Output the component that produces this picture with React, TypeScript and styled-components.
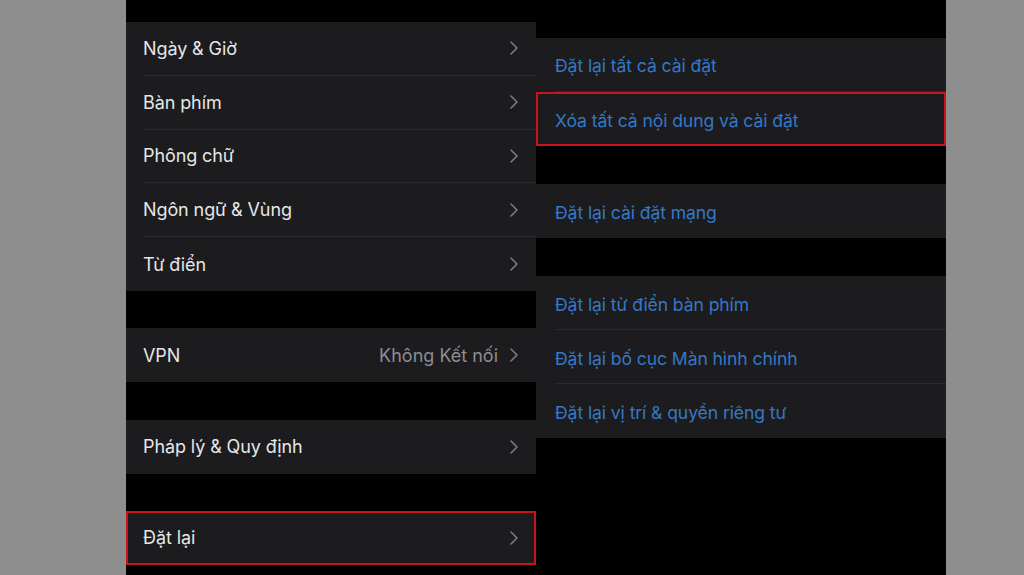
import React from "react";
import styled, { createGlobalStyle } from "styled-components";

const Global = createGlobalStyle`
  html, body { margin: 0; padding: 0; background: #8e8e8e; }
  body { font-family: "Inter", "Noto Sans", sans-serif; -webkit-font-smoothing: antialiased; }
`;

const Page = styled.div`
  display: flex;
  width: 1024px;
  height: 575px;
  overflow: hidden;
  background: #8e8e8e;
`;

const Side = styled.div<{ $w: number }>`
  width: ${(p) => p.$w}px;
  flex: none;
  background: #8e8e8e;
`;

const Stage = styled.div`
  display: flex;
  width: 820px;
  flex: none;
  background: #000;
`;

const Column = styled.div<{ $top: number; $gap: number }>`
  width: 410px;
  flex: none;
  display: flex;
  flex-direction: column;
  gap: ${(p) => p.$gap}px;
  padding-top: ${(p) => p.$top}px;
`;

const Group = styled.div`
  display: flex;
  flex-direction: column;
  background: #1c1c1e;
`;

const Row = styled.div<{ $hl?: boolean; $inset: number }>`
  display: flex;
  height: 53.8px;
  flex: none;
  padding-left: ${(p) => p.$inset}px;
  box-shadow: ${(p) => (p.$hl ? "inset 0 0 0 2px #c8141c" : "none")};
  &:not(:last-child) > div {
    border-bottom: 1px solid #2a2a2d;
  }
`;

const RowInner = styled.div`
  flex: 1;
  display: flex;
  align-items: center;
  padding-right: 18px;
  gap: 12px;
`;

const Label = styled.span<{ $blue?: boolean }>`
  flex: 1;
  font-size: ${(p) => (p.$blue ? "17.6px" : "18px")};
  letter-spacing: -0.1px;
  padding-top: ${(p) => (p.$blue ? "3px" : "0")};
  color: ${(p) => (p.$blue ? "#3478c6" : "#e6e6e8")};
`;

const Value = styled.span`
  font-size: 18px;
  color: #8d8d93;
`;

const Chevron = () => (
  <svg width="8" height="14" viewBox="0 0 8 14" fill="none">
    <path d="M1 1l6 6-6 6" stroke="#7c7c80" strokeWidth="1.6" strokeLinecap="round" strokeLinejoin="round" />
  </svg>
);

type Item = { label: string; value?: string; hl?: boolean };

const leftGroups: Item[][] = [
  [
    { label: "Ngày & Giờ" },
    { label: "Bàn phím" },
    { label: "Phông chữ" },
    { label: "Ngôn ngữ & Vùng" },
    { label: "Từ điển" },
  ],
  [{ label: "VPN", value: "Không Kết nối" }],
  [{ label: "Pháp lý & Quy định" }],
  [{ label: "Đặt lại", hl: true }],
];

const rightGroups: Item[][] = [
  [{ label: "Đặt lại tất cả cài đặt" }, { label: "Xóa tất cả nội dung và cài đặt", hl: true }],
  [{ label: "Đặt lại cài đặt mạng" }],
  [
    { label: "Đặt lại từ điển bàn phím" },
    { label: "Đặt lại bố cục Màn hình chính" },
    { label: "Đặt lại vị trí & quyền riêng tư" },
  ],
];

export default function App() {
  return (
    <>
      <Global />
      <Page>
        <Side $w={126} />
        <Stage>
          <Column $top={22} $gap={37.5}>
            {leftGroups.map((g, i) => (
              <Group key={i}>
                {g.map((it) => (
                  <Row key={it.label} $hl={it.hl} $inset={17}>
                    <RowInner>
                      <Label>{it.label}</Label>
                      {it.value && <Value>{it.value}</Value>}
                      <Chevron />
                    </RowInner>
                  </Row>
                ))}
              </Group>
            ))}
          </Column>
          <Column $top={38} $gap={38.5}>
            {rightGroups.map((g, i) => (
              <Group key={i}>
                {g.map((it) => (
                  <Row key={it.label} $hl={it.hl} $inset={19}>
                    <RowInner>
                      <Label $blue>{it.label}</Label>
                    </RowInner>
                  </Row>
                ))}
              </Group>
            ))}
          </Column>
        </Stage>
        <Side $w={78} />
      </Page>
    </>
  );
}
